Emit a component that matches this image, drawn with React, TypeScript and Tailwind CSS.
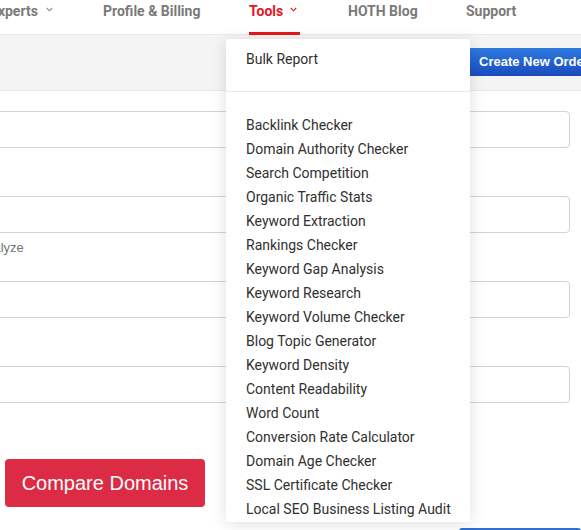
import React from "react";

const Chevron = ({ color }: { color: string }) => (
  <svg width="7" height="5" viewBox="0 0 7 5" className="shrink-0">
    <polyline points="0.8,1 3.5,3.8 6.2,1" fill="none" stroke={color} strokeWidth="1.1" />
  </svg>
);

const tools = [
  "Backlink Checker",
  "Domain Authority Checker",
  "Search Competition",
  "Organic Traffic Stats",
  "Keyword Extraction",
  "Rankings Checker",
  "Keyword Gap Analysis",
  "Keyword Research",
  "Keyword Volume Checker",
  "Blog Topic Generator",
  "Keyword Density",
  "Content Readability",
  "Word Count",
  "Conversion Rate Calculator",
  "Domain Age Checker",
  "SSL Certificate Checker",
  "Local SEO Business Listing Audit",
];

export default function App() {
  return (
    <div className="relative w-[581px] h-[530px] overflow-hidden bg-white font-['Roboto',sans-serif]">
      {/* Header nav */}
      <div className="flex h-[35px] border-b border-[#ebebeb] bg-white text-[14px] font-bold leading-[16px] text-[#7a7a7a] whitespace-nowrap">
        <div className="flex w-[113px] shrink-0 -ml-[10px] pt-[3px]">
          <span>Experts</span>
          <span className="ml-[8px] mt-[4px]"><Chevron color="#8a8a8a" /></span>
        </div>
        <div className="w-[146px] shrink-0 pt-[3px]">Profile &amp; Billing</div>
        <div className="w-[99px] shrink-0">
          <div className="flex h-[35px] w-[51px] border-b-[3px] border-[#e5161f] pt-[3px] text-[#e5161f]">
            <span>Tools</span>
            <span className="ml-auto mr-[3px] mt-[4px]"><Chevron color="#e5161f" /></span>
          </div>
        </div>
        <div className="w-[118px] shrink-0 pt-[3px]">HOTH Blog</div>
        <div className="shrink-0 pt-[3px]">Support</div>
      </div>

      {/* Gray toolbar */}
      <div className="flex h-[56px] items-start border-b border-[#e6e6e6] bg-[#f4f4f4]">
        <button className="ml-[467px] mt-[13px] h-[28px] shrink-0 whitespace-nowrap rounded-[3px] bg-gradient-to-b from-[#2e7ae0] to-[#1b4bbd] px-[12px] font-['Liberation_Sans',sans-serif] text-[13px] font-bold text-white">
          Create New Order
        </button>
      </div>

      {/* Form */}
      <div className="-ml-[10px] mr-[11px] pt-[20px]">
        <div className="h-[37px] rounded-[4px] border border-[#cfd3da]" />
        <div className="h-[48px]" />
        <div className="h-[37px] rounded-[4px] border border-[#cfd3da]" />
        <div className="h-[48px] pt-[2px]">
          <span className="ml-[-11px] font-['Liberation_Sans',sans-serif] text-[13px] leading-[16px] text-[#6f7479]">
            analyze
          </span>
        </div>
        <div className="h-[37px] rounded-[4px] border border-[#cfd3da]" />
        <div className="h-[48px]" />
        <div className="h-[37px] rounded-[4px] border border-[#cfd3da]" />
      </div>

      <button className="ml-[5px] mt-[56px] h-[48px] w-[200px] rounded-[4px] bg-[#dc2b44] font-['Liberation_Sans',sans-serif] text-[20px] text-white">
        Compare Domains
      </button>
      <div className="ml-[459px] mt-[21px] h-[3px] rounded-t-[3px] bg-[#2f6fd6]" />

      {/* Dropdown menu */}
      <div className="absolute left-[226px] top-[39px] h-[483px] w-[244px] rounded-[3px] bg-white shadow-[0_2px_16px_rgba(0,0,0,0.13)] text-[14px] leading-[24px] text-[#303030]">
        <div className="h-[53px] border-b border-[#e8e8e8] px-[20px] pt-[8px]">Bulk Report</div>
        <div className="px-[20px] pt-[21px]">
          {tools.map((t) => (
            <div key={t} className="whitespace-nowrap">{t}</div>
          ))}
        </div>
      </div>
    </div>
  );
}
